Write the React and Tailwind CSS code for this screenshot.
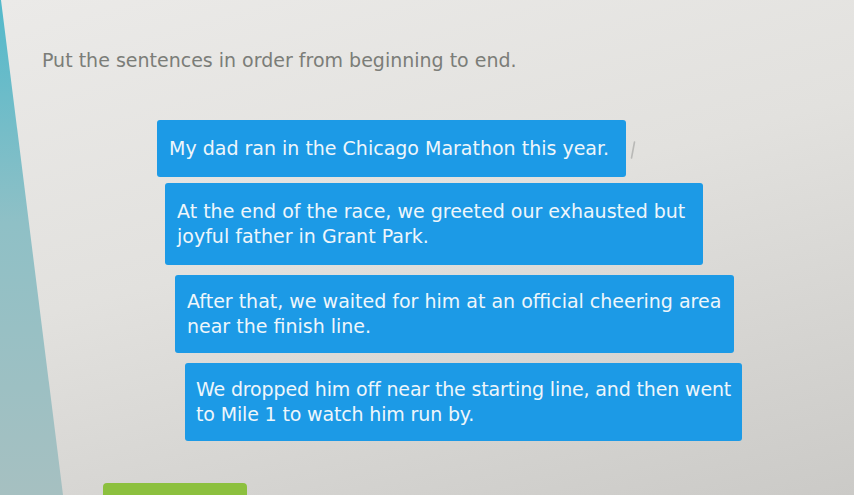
const sentences = [
  {
    lines: ["My dad ran in the Chicago Marathon this year."],
    box: "ml-[115px] mt-[47px] w-[469px] py-4",
  },
  {
    lines: [
      "At the end of the race, we greeted our exhausted but",
      "joyful father in Grant Park.",
    ],
    box: "ml-[123px] mt-[6px] w-[538px] py-4",
  },
  {
    lines: [
      "After that, we waited for him at an official cheering area",
      "near the finish line.",
    ],
    box: "ml-[133px] mt-[10px] w-[559px] py-[14px]",
  },
  {
    lines: [
      "We dropped him off near the starting line, and then went",
      "to Mile 1 to watch him run by.",
    ],
    box: "ml-[143px] mt-[10px] w-[557px] py-[14px] pl-[11px] tracking-[-0.15px]",
  },
];

function SentenceCard({ lines, box }) {
  return (
    <div
      className={`${box} rounded-[3px] bg-[#1c9ae6] px-3 text-[19px] leading-[25px] whitespace-nowrap text-[#eef6fb]`}
    >
      {lines.map((line, i) => (
        <div key={i}>{line}</div>
      ))}
    </div>
  );
}

export default function App() {
  return (
    <div className="h-[495px] w-full overflow-hidden bg-[linear-gradient(to_bottom,#52b9cb,#8fc0c6_45%,#a6c0c1)] font-['DejaVu_Sans',Verdana,sans-serif]">
      <div className="flex h-full flex-col bg-[linear-gradient(165deg,#ebeae8_0%,#e2e1de_45%,#cbcac7_100%)] pt-[48px] pl-[42px] [clip-path:polygon(1px_0,100%_0,100%_100%,63px_100%)]">
        <p className="text-[19px] leading-[25px] text-[#7b7d78]">
          Put the sentences in order from beginning to end.
        </p>

        <div className="relative flex flex-col items-start">
          {sentences.map((s, i) => (
            <SentenceCard key={i} {...s} />
          ))}
          {/* mouse pointer sitting just right of the first card */}
          <svg
            className="absolute top-[68px] left-[588px]"
            width="6"
            height="18"
            viewBox="0 0 6 18"
          >
            <path d="M4.5 1 L1.5 17" stroke="#b9b9b7" strokeWidth="1.6" strokeLinecap="round" />
          </svg>
        </div>

        <button className="mt-[42px] ml-[61px] h-[14px] w-[144px] shrink-0 rounded-t-[4px] bg-[#8cc03e]" />
      </div>
    </div>
  );
}
